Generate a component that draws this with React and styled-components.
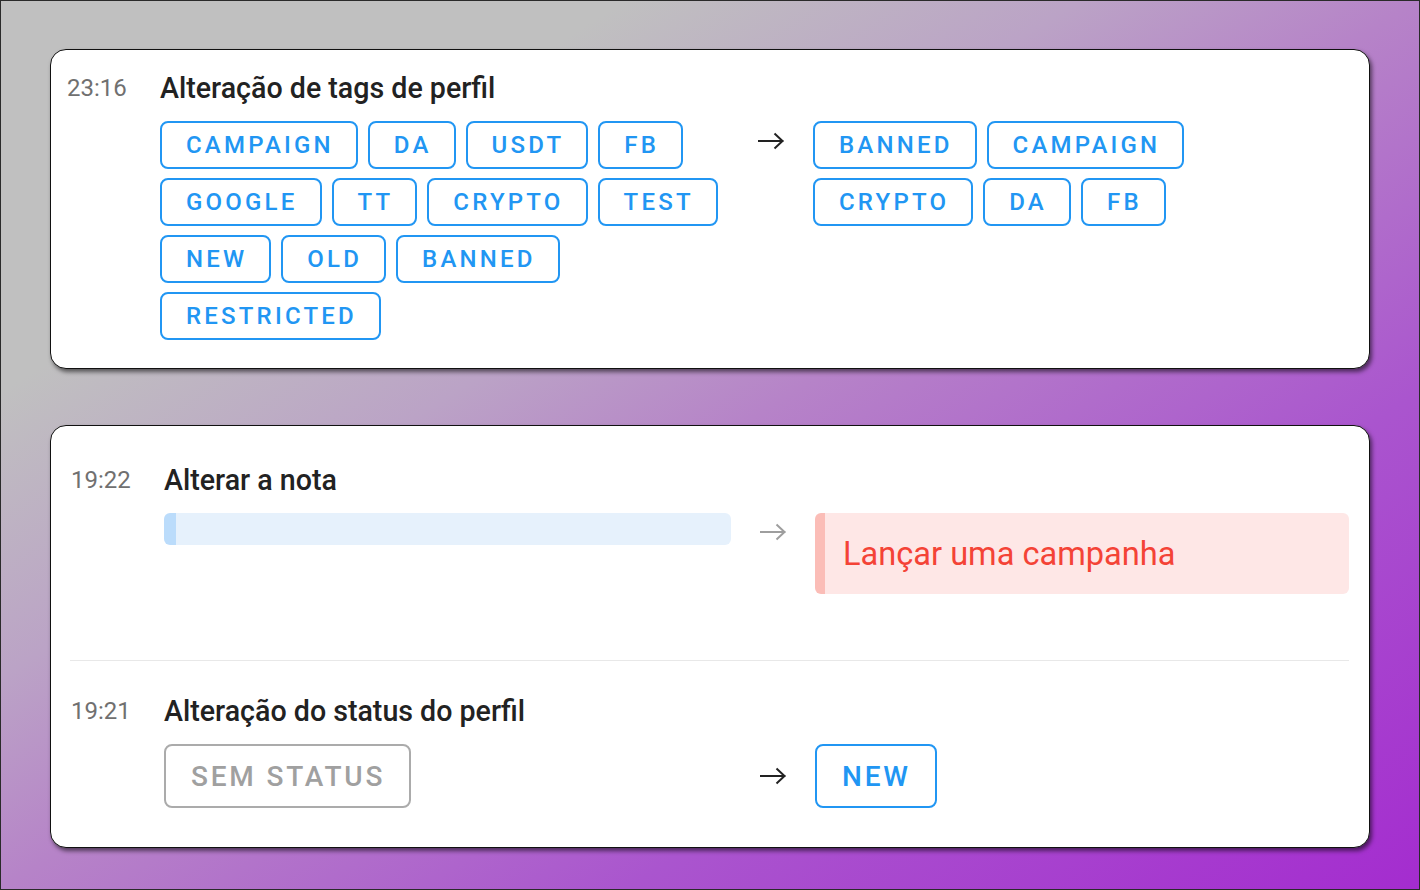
import { createGlobalStyle, styled } from 'styled-components';

const GlobalStyle = createGlobalStyle`
  html, body {
    margin: 0;
    padding: 0;
  }
  body {
    font-family: Roboto, "Liberation Sans", sans-serif;
  }
`;

const tagHistory = {
  time: '23:16',
  title: 'Alteração de tags de perfil',
  before: ['CAMPAIGN', 'DA', 'USDT', 'FB', 'GOOGLE', 'TT', 'CRYPTO', 'TEST', 'NEW', 'OLD', 'BANNED', 'RESTRICTED'],
  after: ['BANNED', 'CAMPAIGN', 'CRYPTO', 'DA', 'FB'],
};

function ArrowIcon({ color, offset }) {
  return (
    <StyledArrow $offset={offset}>
      <svg width="28" height="18" viewBox="0 0 28 18" fill="none">
        <path d="M1 9H26.5M17.5 1.5L25.5 9L17.5 16.5" stroke={color} strokeWidth="2" />
      </svg>
    </StyledArrow>
  );
}

function App() {
  return (
    <>
      <GlobalStyle />
      <StyledPage>
        <StyledCard $inset={15}>
          <StyledEntry $pad={'21px 0 28px'}>
            <StyledTime>{tagHistory.time}</StyledTime>
            <StyledBody>
              <StyledTitle>{tagHistory.title}</StyledTitle>
              <StyledChange $left={569}>
                <StyledTagList>
                  {tagHistory.before.map(tag => (
                    <StyledTag key={tag}>{tag}</StyledTag>
                  ))}
                </StyledTagList>
                <ArrowIcon color={'#222'} offset={11} />
                <StyledTagList>
                  {tagHistory.after.map(tag => (
                    <StyledTag key={tag}>{tag}</StyledTag>
                  ))}
                </StyledTagList>
              </StyledChange>
            </StyledBody>
          </StyledEntry>
        </StyledCard>

        <StyledCard $inset={19}>
          <StyledEntry $pad={'37px 0 66px'} $divided>
            <StyledTime>19:22</StyledTime>
            <StyledBody>
              <StyledTitle>Alterar a nota</StyledTitle>
              <StyledChange $left={567}>
                <StyledNote $tone={'blue'} $empty />
                <ArrowIcon color={'#9e9e9e'} offset={10} />
                <StyledNote $tone={'red'}>Lançar uma campanha</StyledNote>
              </StyledChange>
            </StyledBody>
          </StyledEntry>
          <StyledEntry $pad={'33px 0 39px'}>
            <StyledTime>19:21</StyledTime>
            <StyledBody>
              <StyledTitle>Alteração do status do perfil</StyledTitle>
              <StyledChange $left={567}>
                <div>
                  <StyledTag $large $muted>
                    SEM STATUS
                  </StyledTag>
                </div>
                <ArrowIcon color={'#222'} offset={23} />
                <div>
                  <StyledTag $large>NEW</StyledTag>
                </div>
              </StyledChange>
            </StyledBody>
          </StyledEntry>
        </StyledCard>
      </StyledPage>
    </>
  );
}

export default App;

const StyledPage = styled.main`
  box-sizing: border-box;
  width: 1420px;
  height: 890px;
  padding: 48px 50px 0 49px;
  display: flex;
  flex-direction: column;
  gap: 56px;
  border: 1px solid #2a2a2a;
  background: linear-gradient(
    to bottom right,
    #c0c0c0 22%,
    #bba3c6 38%,
    #b683c8 50%,
    #aa55ce 72%,
    #a42ccf 100%
  );
  overflow: hidden;
`;

const StyledCard = styled.section`
  box-sizing: border-box;
  width: 1320px;
  padding: 0 20px 0 ${({ $inset }) => $inset}px;
  background: #fff;
  border: 1px solid #111;
  border-radius: 16px;
  box-shadow: 2px 3px 4px rgba(0, 0, 0, 0.55);
`;

const StyledEntry = styled.article`
  display: grid;
  grid-template-columns: 94px 1fr;
  padding: ${({ $pad }) => $pad};
  border-bottom: ${({ $divided }) => ($divided ? '1px solid #e8e8e8' : 'none')};
`;

const StyledTime = styled.div`
  padding-left: 1px;
  font-size: 24px;
  line-height: 34px;
  color: #707070;
`;

const StyledBody = styled.div`
  display: flex;
  flex-direction: column;
  gap: 16px;
`;

const StyledTitle = styled.h3`
  margin: 0;
  font-size: 28.6px;
  line-height: 34px;
  font-weight: 500;
  color: #222;
`;

const StyledChange = styled.div`
  display: grid;
  grid-template-columns: ${({ $left }) => $left}px 84px 1fr;
  align-items: start;
`;

const StyledTagList = styled.div`
  display: flex;
  flex-wrap: wrap;
  gap: 9px 10px;
`;

const StyledTag = styled.span`
  box-sizing: border-box;
  display: inline-flex;
  align-items: center;
  height: ${({ $large }) => ($large ? 64 : 48)}px;
  padding: 0 ${({ $large }) => ($large ? 24 : 22)}px 0 ${({ $large }) => ($large ? 25 : 24)}px;
  border: 2px solid ${({ $muted }) => ($muted ? '#ababab' : '#2196f3')};
  border-radius: 8px;
  color: ${({ $muted }) => ($muted ? '#a0a0a0' : '#2196f3')};
  font-size: ${({ $large }) => ($large ? 28 : 24)}px;
  font-weight: 500;
  letter-spacing: ${({ $large }) => ($large ? '0.1em' : '3.2px')};
  white-space: nowrap;
`;

const StyledArrow = styled.div`
  display: flex;
  justify-content: center;
  padding-top: ${({ $offset }) => $offset}px;
`;

const StyledNote = styled.div`
  box-sizing: border-box;
  display: flex;
  align-items: center;
  height: ${({ $empty }) => ($empty ? 32 : 81)}px;
  padding: 0 18px;
  border-left: ${({ $tone }) => ($tone === 'red' ? '10px solid #fbbdb7' : '12px solid #bbdcfb')};
  border-radius: 6px;
  background: ${({ $tone }) => ($tone === 'red' ? '#fee7e6' : '#e6f1fc')};
  color: #f44336;
  font-size: 32.6px;
`;
